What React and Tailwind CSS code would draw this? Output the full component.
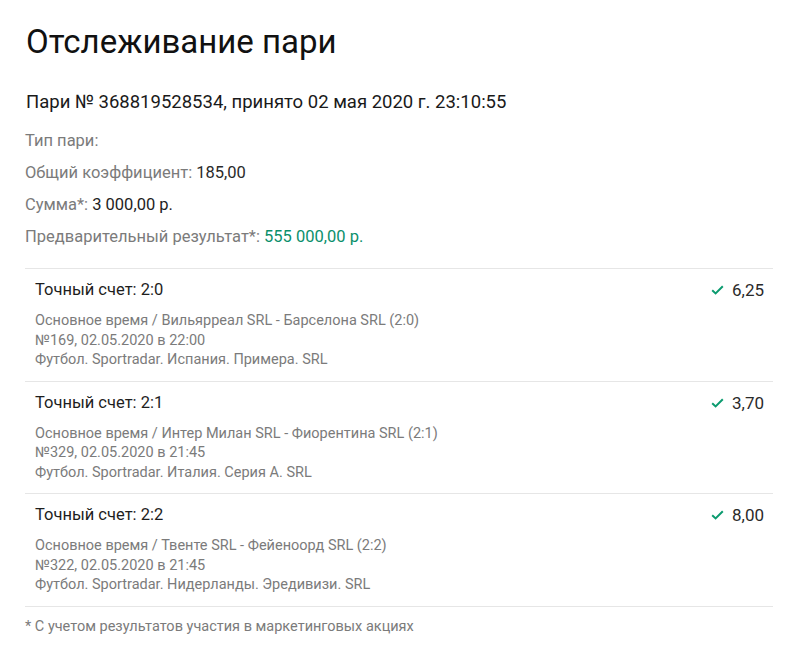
const bets = [
  {
    title: "Точный счет: 2:0",
    odds: "6,25",
    lines: [
      "Основное время / Вильярреал SRL - Барселона SRL (2:0)",
      "№169, 02.05.2020 в 22:00",
      "Футбол. Sportradar. Испания. Примера. SRL",
    ],
  },
  {
    title: "Точный счет: 2:1",
    odds: "3,70",
    lines: [
      "Основное время / Интер Милан SRL - Фиорентина SRL (2:1)",
      "№329, 02.05.2020 в 21:45",
      "Футбол. Sportradar. Италия. Серия А. SRL",
    ],
  },
  {
    title: "Точный счет: 2:2",
    odds: "8,00",
    lines: [
      "Основное время / Твенте SRL - Фейеноорд SRL (2:2)",
      "№322, 02.05.2020 в 21:45",
      "Футбол. Sportradar. Нидерланды. Эредивизи. SRL",
    ],
  },
];

function Check() {
  return (
    <svg width="13" height="10" viewBox="0 0 13 10" className="mr-[8px]">
      <path d="M1.2 5.2 L4.6 8.4 L11.8 1.2" fill="none" stroke="#0b9b6f" strokeWidth="2" />
    </svg>
  );
}

function BetRow({ bet }) {
  return (
    <div className="border-t border-[#e6e6e6] pl-[10px] pr-[9px] pt-[11px] pb-[11px]">
      <div className="flex items-center justify-between">
        <span className="text-[16.5px] leading-[20px] text-[#1e1e1e]">{bet.title}</span>
        <span className="flex items-center text-[17px] leading-[20px] text-[#2a2a2a]">
          <Check />
          {bet.odds}
        </span>
      </div>
      <div className="mt-[11px] text-[14.5px] leading-[19.5px] text-[#7b7b7b]">
        {bet.lines.map((l) => (
          <div key={l}>{l}</div>
        ))}
      </div>
    </div>
  );
}

export default function App() {
  return (
    <div className="min-h-[651px] bg-white font-['Roboto',sans-serif] pl-[25px] pr-[27px] pt-[20px]">
      <h1 className="pl-[1px] text-[33px] leading-[44px] text-[#111] font-normal">Отслеживание пари</h1>
      <div className="mt-[26px] pl-[1px] text-[18.5px] leading-[24px] text-[#1a1a1a]">
        Пари № 368819528534, принято 02 мая 2020 г. 23:10:55
      </div>
      <div className="mt-[11px] text-[16.5px] leading-[32px] text-[#7b7b7b]">
        <div>Тип пари:</div>
        <div>
          Общий коэффициент: <span className="text-[#2a2a2a]">185,00</span>
        </div>
        <div>
          Сумма*: <span className="text-[#1e1e1e]">3 000,00 р.</span>
        </div>
        <div>
          Предварительный результат*: <span className="text-[#0b8f6c]">555 000,00 р.</span>
        </div>
      </div>
      <div className="mt-[15px] border-b border-[#e6e6e6]">
        {bets.map((b) => (
          <BetRow key={b.title} bet={b} />
        ))}
      </div>
      <div className="mt-[10px] text-[14.5px] leading-[20px] text-[#7b7b7b]">
        * С учетом результатов участия в маркетинговых акциях
      </div>
    </div>
  );
}
